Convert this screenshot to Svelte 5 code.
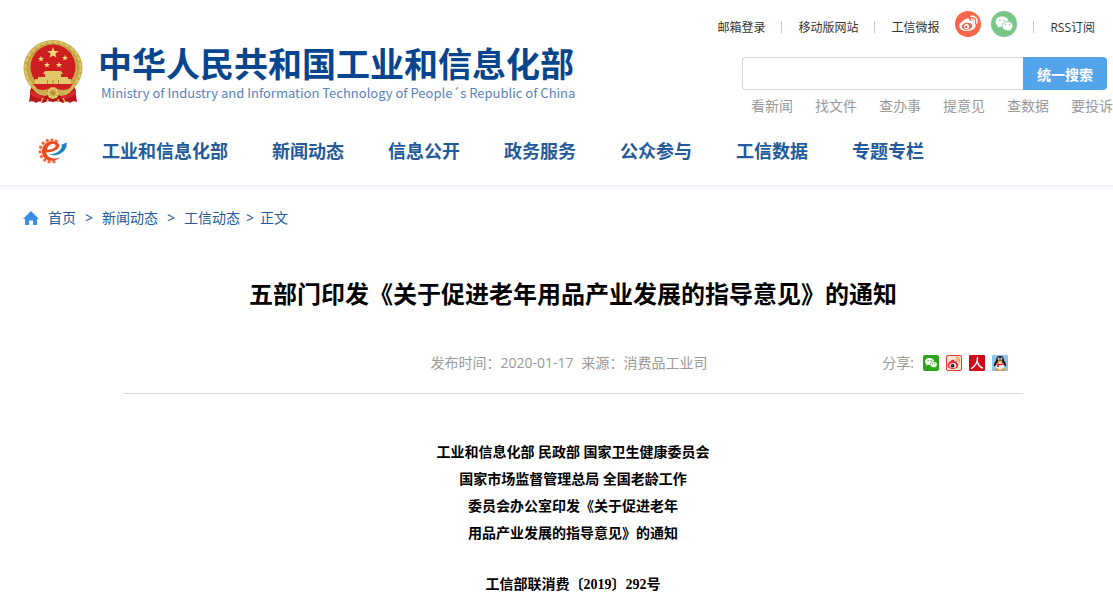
<script>
    const quickLinks = ['看新闻', '找文件', '查办事', '提意见', '查数据', '要投诉'];

    const menu = [
        '工业和信息化部',
        '新闻动态',
        '信息公开',
        '政务服务',
        '公众参与',
        '工信数据',
        '专题专栏',
    ];

    const docTitle = [
        '工业和信息化部 民政部 国家卫生健康委员会',
        '国家市场监督管理总局 全国老龄工作',
        '委员会办公室印发《关于促进老年',
        '用品产业发展的指导意见》的通知',
    ];

    // angles of the gear teeth, open on the right
    const teeth = [-20, -45, -70, -95, -120, -145, -170, -195, 5, 28];

    let keyword = '';
</script>

{#snippet star(x, y, size)}
    <path
        transform="translate({x} {y}) scale({size})"
        d="M0-5 1.2-1.6 4.8-1.5 1.9.6 2.9 4 0 2-2.9 4-1.9.6-4.8-1.5-1.2-1.6Z"
        fill="#f3dc7c"
    />
{/snippet}

<header>
    <div class="top">
        <a class="brand" href="/">
            <svg class="emblem" viewBox="0 0 60 64" aria-hidden="true">
                <path d="M9 42 6 62q4-2 7 1 3-3 7 0 5-3 10-1 5-2 10 1 4-3 7 0 3-3 7-1l-3-20Z" fill="#b9151d" />
                <ellipse cx="30" cy="28" rx="29.500" ry="28" fill="#c9ab4a" />
                <ellipse cx="30" cy="28" rx="27.500" ry="26" fill="none" stroke="#dfc66c" stroke-width="2" stroke-dasharray="4 2" />
                <ellipse cx="30" cy="28" rx="25" ry="24" fill="none" stroke="#b08f36" stroke-dasharray="3 3" />
                <circle cx="30" cy="27" r="22.500" fill="#cd1f20" />
                {@render star(30, 13, 1.2)}
                {@render star(18, 19, 0.65)}
                {@render star(42, 18, 0.65)}
                {@render star(24, 25, 0.65)}
                {@render star(36, 25, 0.65)}
                <path d="M22 31h16l2 3H20ZM22 34h16v3H22ZM15 37h30v2H15ZM12 39h36v5H12Z" fill="#e0c669" />
                <path d="M24 40h1v4h-1zM29.500 40h1v4h-1zM35 40h1v4h-1z" fill="#b9862a" />
                <path d="M10 44h40l-5 6q-15 5-30 0Z" fill="#cd1f20" />
                <path d="M5 42q10 11 20 7l-2 7q-10 1-18-14ZM55 42q-10 11-20 7l2 7q10 1 18-14Z" fill="#ceb053" />
                <path d="M7 49q7 7 15 7l-1 3q-8 0-14-5ZM53 49q-7 7-15 7l1 3q8 0 14-5Z" fill="#d82a2c" />
                <circle cx="30" cy="53" r="6" fill="#c9a846" />
                <circle cx="30" cy="53" r="4.500" fill="none" stroke="#ecd27b" stroke-width="2" stroke-dasharray="2 1" />
                <circle cx="30" cy="53" r="1.800" fill="#ad852e" />
                <path d="m20 58-2 4M25 59l-1 3M35 59l1 3M40 58l2 4" stroke="#ddb954" stroke-width="1.500" />
            </svg>
            <span class="brand-text">
                <strong>中华人民共和国工业和信息化部</strong>
                <small>Ministry of Industry and Information Technology of People´s Republic of China</small>
            </span>
        </a>

        <div class="tools">
            <div class="tool-links">
                <a href="/mail">邮箱登录</a>
                <i></i>
                <a href="/mobile">移动版网站</a>
                <i></i>
                <a href="/weibao">工信微报</a>
                <span class="social">
                    <a href="/weibo" aria-label="微博">
                        <svg viewBox="0 0 26 26">
                            <circle cx="13" cy="13" r="13" fill="#fa654b" />
                            <path d="M11 8c2-1 4-.5 3.500 2 2-1 4.500-.8 4 1.500 4 1.500 3 8-6 8.500-8 .3-10-5-6.500-8.500C7.500 10 9 8.500 11 8Z" fill="#fff" />
                            <ellipse cx="12" cy="15.300" rx="5.300" ry="3.500" transform="rotate(-8 12 15.300)" fill="#fa654b" />
                            <circle cx="11.500" cy="15.500" r="2.600" fill="#fff" />
                            <circle cx="11" cy="16" r="1.300" fill="#fa654b" />
                            <path d="M16 5.500c4-.8 7 2.500 5.800 6.500M16.500 8.200c2-.3 3.300 1.200 2.800 3" fill="none" stroke="#fff" stroke-width="1.500" stroke-linecap="round" />
                        </svg>
                    </a>
                    <a href="/wechat" aria-label="微信">
                        <svg viewBox="0 0 26 26">
                            <circle cx="13" cy="13" r="13" fill="#78c585" />
                            <path d="M11 5.500c-4 0-6.500 2.500-6.500 5.300 0 1.800 1 3.200 2.500 4.200L6.500 17l2.300-1.200 2.200.3c4 0 6.500-2.300 6.500-5.300S15 5.500 11 5.500Z" fill="#fff" />
                            <path d="M16.500 10.500c-3.300 0-5.500 2-5.500 4.600s2.200 4.600 5.500 4.600l1.800-.3 2.100 1.100-.4-1.900c1.200-.9 2-2 2-3.500 0-2.600-2.200-4.600-5.500-4.600Z" fill="#fff" stroke="#78c585" stroke-width=".8" />
                            <path d="M8.300 9.300h1.200M12.600 9.300h1.200M14.200 13.700h1M17.800 13.700h1" stroke="#78c585" stroke-width="1.300" />
                        </svg>
                    </a>
                </span>
                <i></i>
                <a href="/rss">RSS订阅</a>
            </div>

            <form on:submit|preventDefault>
                <input type="text" aria-label="搜索" bind:value={keyword} />
                <button>统一搜索</button>
            </form>

            <div class="quick">
                {#each quickLinks as q}
                    <a href="/search">{q}</a>
                {/each}
            </div>
        </div>
    </div>

    <nav>
        <svg class="gear" viewBox="0 0 30 28" aria-hidden="true">
            {#each teeth as t}
                <rect x="12.500" y="1.500" width="3" height="3" fill="#f06a3c" transform="rotate({t} 14 14)" />
            {/each}
            <path
                d="M23 20.500C15 27 5 23 5 14.500 5 6 14 2 20 5.500c5 3 2 9-11 10 1.500 5.500 8 7.500 14 5ZM10 12.800c7-.3 10-3.300 8-5.300-2.500-2-7.500.8-8 5.300Z"
                fill="#ea4a1c"
                fill-rule="evenodd"
            />
            <path d="M12 17.500c7-.5 12-3.500 13-8.500l-1-1 5.500-2.500c1.500 8-8 15-17.500 12Z" fill="#1f7fc6" />
        </svg>
        {#each menu as m}
            <a href="/menu">{m}</a>
        {/each}
    </nav>
</header>

<main>
    <div class="crumbs">
        <svg viewBox="0 0 16 14" aria-hidden="true">
            <path d="M8 0 16 8h-2v6h-4V9.500H6V14H2V8H0Z" fill="#3a8ee6" />
        </svg>
        <a href="/">首页</a>
        <span class="wide">&gt;</span>
        <a href="/news">新闻动态</a>
        <span class="wide">&gt;</span>
        <a href="/news/gxdt">工信动态</a>
        <span>&gt;</span>
        正文
    </div>

    <article>
        <h1>五部门印发《关于促进老年用品产业发展的指导意见》的通知</h1>

        <div class="meta">
            <p><span>发布时间：2020-01-17</span><span>来源：消费品工业司</span></p>
            <div class="share">
                <span>分享:</span>
                <a href="/share/wechat" aria-label="微信">
                    <svg viewBox="0 0 16 16">
                        <rect width="16" height="16" rx="2" fill="#2ba516" />
                        <path d="M6.500 3C4 3 2 4.500 2 6.500c0 1.200.6 2 1.500 2.700L3 10.800l2-1 1.500.2C9 10 11 8.500 11 6.500S9 3 6.500 3Z" fill="#fff" />
                        <path d="M10.500 6.500C8.300 6.500 7 7.800 7 9.500s1.300 3 3.500 3l1.200-.2 1.600.8-.3-1.400c.7-.5 1.200-1.300 1.200-2.200 0-1.700-1.500-3-3.700-3Z" fill="#fff" stroke="#2ba516" stroke-width=".6" />
                        <path d="M4.600 5.500h1M7.500 5.500h1M8.900 8.800h1M11.200 8.800h1" stroke="#2ba516" />
                    </svg>
                </a>
                <a href="/share/weibo" aria-label="微博">
                    <svg viewBox="0 0 16 16">
                        <rect x=".5" y=".5" width="15" height="15" rx="1.500" fill="#fbe6d8" stroke="#dd3b2c" />
                        <path d="M6 5c1.500-.6 2.700 0 2.300 1.500C10 6 11 6.300 10.800 7.700 14 9 12 14 7 14c-6 0-6.500-4-4-6.500Q4.500 5.600 6 5Z" fill="#e22531" />
                        <ellipse cx="6.800" cy="10.600" rx="3.500" ry="2.500" fill="#fff" />
                        <circle cx="6.500" cy="10.700" r="1.900" fill="#1c1010" />
                        <circle cx="6" cy="10" r=".6" fill="#fff" />
                        <path d="M9.500 2.500c3-.5 5 2 4 5M9.800 4.600c1.500-.2 2.300.8 2 2.300" fill="none" stroke="#f39a2e" stroke-width="1.200" />
                    </svg>
                </a>
                <a href="/share/people" aria-label="人民网">
                    <svg viewBox="0 0 16 16">
                        <rect width="16" height="16" rx="1" fill="#cf0a16" />
                        <path d="M8.500 2.500C8.500 7 6.500 11 2.500 13.500M8.300 6.500c.7 3 2.500 5.500 5.200 6.500" fill="none" stroke="#fff" stroke-width="1.400" stroke-linecap="round" />
                    </svg>
                </a>
                <a href="/share/qq" aria-label="QQ">
                    <svg viewBox="0 0 16 16">
                        <rect width="16" height="16" rx="1" fill="#8cc4ea" />
                        <path d="M8 1C5 1 4 3 4 5.500 2.500 7.500 1.500 9.500 2 11.500l2-1.500h8l2 1.500c.5-2-.5-4-2-6C12 3 11 1 8 1Z" fill="#17171c" />
                        <ellipse cx="8" cy="11" rx="3.800" ry="4" fill="#fff" />
                        <ellipse cx="6.600" cy="4" rx="1" ry="1.400" fill="#fff" />
                        <ellipse cx="9.400" cy="4" rx="1" ry="1.400" fill="#fff" />
                        <path d="M6.600 3.700v1M9.400 3.700v1" stroke="#111" stroke-width=".7" />
                        <ellipse cx="8" cy="6.300" rx="2.600" ry=".9" fill="#f8a51b" />
                        <path d="M3.800 7.500q4.200 2.500 8.400 0v1.800Q9 10.500 7 10v2H5V9.500l-1.200-.4Z" fill="#e3261f" />
                        <ellipse cx="5" cy="14.700" rx="2.500" ry="1.100" fill="#f4921b" />
                        <ellipse cx="11" cy="14.700" rx="2.500" ry="1.100" fill="#f4921b" />
                    </svg>
                </a>
            </div>
        </div>

        <div class="content">
            <p>
                {#each docTitle as line}
                    {line}<br />
                {/each}
            </p>
            <p>工信部联消费〔2019〕292号</p>
        </div>
    </article>
</main>

<style>
    :global(body) {
        background: #fff;
        font-family: 'Open Sans', 'Noto Sans CJK SC', sans-serif;
        font-size: 14px;
        overflow-x: hidden;
    }

    a {
        color: inherit;
        text-decoration: none;
    }

    svg {
        display: block;
    }

    header {
        border-bottom: 2px solid #f0f3f7;
        box-shadow: 0 3px 0 #f9fbfe;
        overflow: hidden;
    }

    .top {
        display: flex;
        justify-content: space-between;
        padding: 10px 6px 0 23px;
    }

    .brand {
        display: flex;
        align-items: flex-start;
        gap: 15px;
        padding-top: 30px;
    }

    .emblem {
        width: 60px;
        height: 64px;
    }

    .brand-text {
        display: flex;
        flex-direction: column;
        padding-top: 3px;
        font-family: 'Noto Sans CJK SC', sans-serif;
        white-space: nowrap;
    }

    .brand strong {
        color: #07458f;
        font-size: 34px;
        line-height: 40px;
    }

    .brand small {
        padding-left: 3px;
        color: #5682bd;
        font-size: 13px;
        line-height: 20px;
    }

    .tools {
        display: flex;
        flex-direction: column;
        align-items: flex-end;
        width: 365px;
    }

    .tool-links {
        display: flex;
        align-items: center;
        gap: 16px;
        height: 34px;
        padding-right: 12px;
        color: #333;
        font-size: 12px;
        white-space: nowrap;
    }

    .tool-links i {
        width: 1px;
        height: 12px;
        background: #c8c8c8;
    }

    .social {
        display: flex;
        gap: 10px;
        padding-bottom: 6px;
    }

    .social svg {
        width: 26px;
        height: 26px;
    }

    form {
        display: flex;
        width: 100%;
        margin-top: 13px;
    }

    input {
        flex: 1;
        min-width: 0;
        height: 33px;
        box-sizing: border-box;
        border: 1px solid #d5d5d5;
        border-right: 0;
        border-radius: 4px 0 0 4px;
        outline: none;
    }

    button {
        width: 84px;
        padding: 0;
        border: 0;
        border-radius: 0 4px 4px 0;
        background: #54a4eb;
        color: #fff;
        font: inherit;
        font-weight: bold;
    }

    .quick {
        display: flex;
        align-self: flex-start;
        gap: 22px;
        padding: 6px 0 0 9px;
        color: #999;
        line-height: 20px;
        white-space: nowrap;
    }

    nav {
        display: flex;
        align-items: center;
        gap: 44px;
        padding: 17px 23px 16px 37px;
        color: #235a9b;
        font-size: 18px;
        font-weight: bold;
        line-height: 36px;
        white-space: nowrap;
    }

    .gear {
        width: 30px;
        height: 28px;
        margin-right: -9px;
    }

    main {
        padding: 21px 23px 0;
    }

    .crumbs {
        display: flex;
        align-items: center;
        gap: 6px;
        color: #235a9b;
        line-height: 20px;
    }

    .crumbs svg {
        width: 16px;
        height: 14px;
        margin-right: 3px;
    }

    .crumbs .wide {
        padding: 0 3px;
    }

    article {
        max-width: 900px;
        margin: 0 auto;
        padding-left: 33px;
    }

    h1 {
        margin: 48px 0 0;
        color: #000;
        font-size: 24px;
        line-height: 36px;
        text-align: center;
    }

    .meta {
        display: grid;
        grid-template-columns: 1fr auto 1fr;
        align-items: center;
        margin-top: 31px;
        padding-bottom: 10px;
        border-bottom: 1px solid #d9d9d9;
        color: #999;
        line-height: 40px;
    }

    .meta p {
        display: flex;
        grid-column: 2;
        gap: 8px;
        margin: 0;
        padding-right: 8px;
    }

    .share {
        display: flex;
        align-items: center;
        justify-content: flex-end;
        gap: 7px;
        padding-right: 15px;
    }

    .share span {
        padding-right: 2px;
    }

    .share svg {
        width: 16px;
        height: 16px;
    }

    .content {
        padding-top: 45px;
        color: #000;
        font-family: 'Liberation Serif', 'Noto Sans CJK SC', serif;
        font-weight: bold;
        line-height: 27px;
        text-align: center;
    }

    .content p {
        margin: 0 0 24px;
    }

    .content p:last-child {
        margin: 0;
    }
</style>
